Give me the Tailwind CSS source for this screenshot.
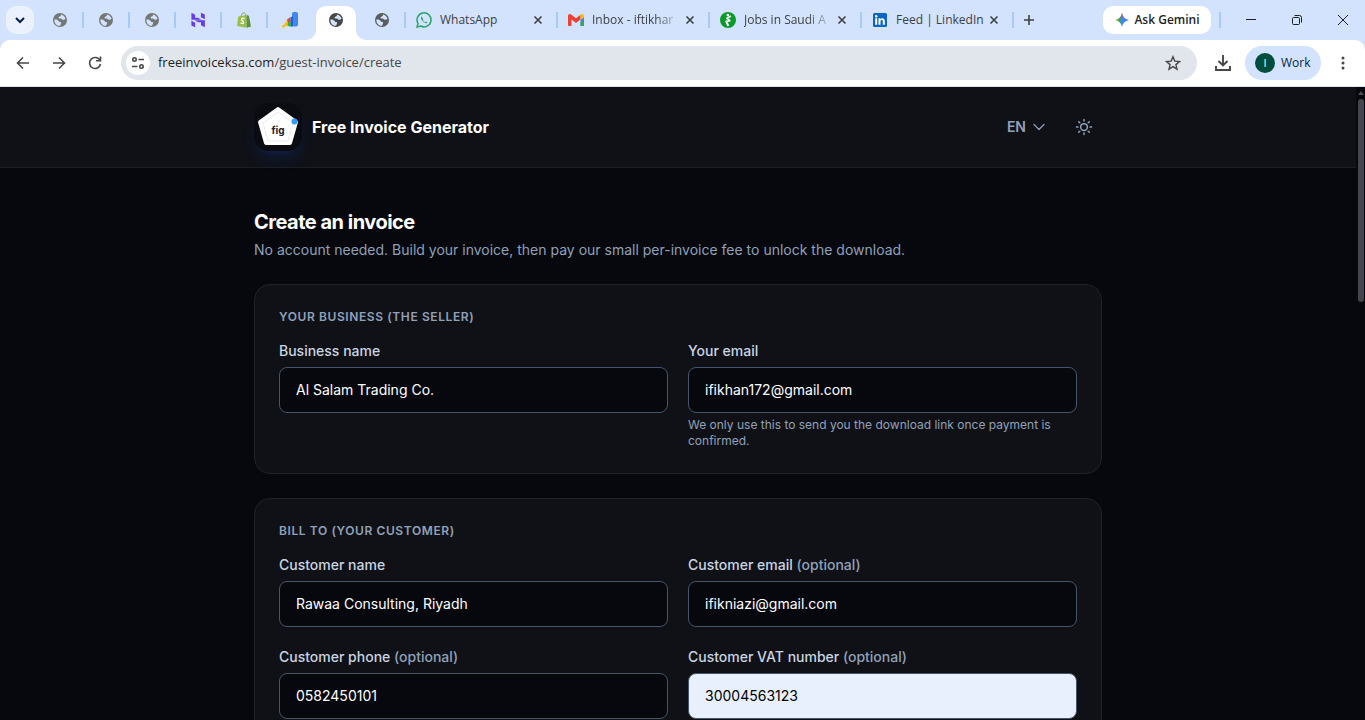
<!DOCTYPE html>
<html lang="en">
<head>
    <meta charset="UTF-8">
    <meta name="viewport" content="width=device-width, initial-scale=1.0">
    <title>Free Invoice Generator</title>
    <script src="https://cdn.jsdelivr.net/npm/@tailwindcss/browser@4"></script>
</head>
<body class="h-screen overflow-hidden flex flex-col bg-[#06080d] font-['Open_Sans',sans-serif]">

    <!-- Shared icons -->
    <svg class="hidden">
        <symbol id="globe" viewBox="0 0 16 16">
            <circle cx="8" cy="8" r="7" fill="currentColor"/>
            <path d="M2.6 7.2c1.5.2 2.6.3 3.600 1.200s1 1.600 2.100 1.600c.9.1 1 .7.7 1.500l-.9 2.300c-3.200.1-5.700-2.300-5.700-5.300z" fill="#d3e3fd"/>
            <path d="M9 2.400c2.200.4 4 2.100 4.500 4.400l-1.500.9c-.7.3-1.400.1-1.900-.5-.6-.6-1.600-.7-2.300-.6-.8.1-1.400-.4-1.200-1.100.2-.8 1-1 1.600-1.300.7-.4.9-1 .8-1.800z" fill="#d3e3fd"/>
        </symbol>
        <symbol id="close" viewBox="0 0 16 16">
            <path d="M4.500 4.500l7 7M11.500 4.500l-7 7" stroke="currentColor" stroke-width="1.600" fill="none"/>
        </symbol>
    </svg>

    <!-- Tab strip -->
    <header class="shrink-0 bg-[#d3e3fd] text-[#1f1f1f]">
        <div class="flex items-center h-10 pl-1.5">
            <button aria-label="Search tabs" class="size-7 mr-[3px] shrink-0 rounded-[10px] bg-[#ebf2fe] flex items-center justify-center">
                <svg class="size-4" viewBox="0 0 16 16" fill="none" stroke="#041e49" stroke-width="2"><path d="M4 6l4 4 4-4"/></svg>
            </button>

            <div class="relative w-[46px] h-10 shrink-0 flex items-center justify-center text-[#747775]">
                <svg class="size-4"><use href="#globe"/></svg>
                <span class="absolute -right-px top-3 w-0.5 h-4 bg-[#a8c7fa]"></span>
            </div>
            <div class="relative w-[46px] h-10 shrink-0 flex items-center justify-center text-[#747775]">
                <svg class="size-4"><use href="#globe"/></svg>
                <span class="absolute -right-px top-3 w-0.5 h-4 bg-[#a8c7fa]"></span>
            </div>
            <div class="relative w-[46px] h-10 shrink-0 flex items-center justify-center text-[#747775]">
                <svg class="size-4"><use href="#globe"/></svg>
                <span class="absolute -right-px top-3 w-0.5 h-4 bg-[#a8c7fa]"></span>
            </div>
            <div class="relative w-[46px] h-10 shrink-0 flex items-center justify-center">
                <svg class="size-4" viewBox="0 0 24 24" fill="#673de6">
                    <path d="M16.400 1v6.800l5.800 3.200V3.900zM2.100 1v10.500h15.300l-5.600-3H7.700V4.300zM16.500 19.700v-4.400h-4.100l-5.700-3 15.600.1V23zM2.100 20.100v-6.800l5.600 3V23z"/>
                </svg>
                <span class="absolute -right-px top-3 w-0.5 h-4 bg-[#a8c7fa]"></span>
            </div>
            <div class="relative w-[46px] h-10 shrink-0 flex items-center justify-center">
                <svg class="size-4" viewBox="0 0 16 16">
                    <path d="M5 4.500C5.300 2 6.600.9 7.800.9s2 1 2.200 3" fill="none" stroke="#7aa23b" stroke-width=".9"/>
                    <path d="M2.300 4.500L10.500 3l.3 12.800L1 14z" fill="#95bf47"/>
                    <path d="M10.500 3l2.400.8L15 14.600l-4.200 1.200z" fill="#5e8e3e"/>
                    <path d="M8.500 6.700c-1.700-.9-3.300-.1-2.900 1.200.3 1 2.200 1.300 2 2.700-.2 1.200-1.800 1.200-2.900.3" fill="none" stroke="#fff" stroke-width="1.400"/>
                </svg>
                <span class="absolute -right-px top-3 w-0.5 h-4 bg-[#a8c7fa]"></span>
            </div>
            <div class="w-[46px] h-10 shrink-0 flex items-center justify-center">
                <svg class="size-4" viewBox="0 0 16 16">
                    <circle cx="1.500" cy="14.200" r="1.300" fill="#fbbc04"/>
                    <path d="M2 12.500l3-4 3-1.500v7H4.500a2 2 0 0 1-2.500-1.500z" fill="#fbbc04"/>
                    <path d="M5 7.500L8.500 5v7L6 10.500z" fill="#ea4335"/>
                    <path d="M6 11l4-3v6.500H7.500A2.500 2.500 0 0 1 6 11z" fill="#34a853"/>
                    <rect x="10" y="0" width="6" height="14.500" rx="2" fill="#4285f4"/>
                    <path d="M8.500 5.500L11 4v10.500H9z" fill="#1967d2"/>
                </svg>
            </div>

            <!-- Active tab -->
            <div class="w-[46px] h-10 shrink-0 flex items-end justify-center text-[#474747]">
                <div class="relative w-10 h-[34px] bg-white rounded-t-[10px] flex justify-center pt-1.5">
                    <svg class="size-4"><use href="#globe"/></svg>
                    <svg class="absolute -left-2.5 bottom-0 size-2.5" viewBox="0 0 10 10" fill="#fff"><path d="M10 0v10H0A10 10 0 0 0 10 0z"/></svg>
                    <svg class="absolute -right-2.5 bottom-0 size-2.5" viewBox="0 0 10 10" fill="#fff"><path d="M0 0v10h10A10 10 0 0 1 0 0z"/></svg>
                </div>
            </div>
            <div class="relative w-[46px] h-10 shrink-0 flex items-center justify-center text-[#5a5d61]">
                <svg class="size-4"><use href="#globe"/></svg>
                <span class="absolute -right-px top-3 w-0.5 h-4 bg-[#a8c7fa]"></span>
            </div>

            <div class="relative w-[152px] h-10 flex items-center pl-[11px] pr-[11px] text-xs text-[#3c4043]">
                <svg class="size-4 mr-2 shrink-0" viewBox="0 0 16 16" fill="none" stroke="#25a566" stroke-width="1.500">
                    <path d="M1 15l1-3.600A7 7 0 1 1 4.700 14z"/>
                    <path d="M5.500 4.500c-1 .8-.8 2.500 1 4.500s3.800 2.800 5 1.700l-1.600-1.200-1 .7c-1-.4-1.700-1.200-2.200-2.200l.6-.8z" fill="#25a566" stroke="none"/>
                </svg>
                <span class="flex-1 min-w-0 whitespace-nowrap">WhatsApp</span>
                <button aria-label="Close tab" class="size-4 shrink-0"><svg class="size-4"><use href="#close"/></svg></button>
                <span class="absolute -right-px top-3 w-0.5 h-4 bg-[#a8c7fa]"></span>
            </div>
            <div class="relative w-[152px] h-10 flex items-center pl-[11px] pr-[11px] text-xs text-[#3c4043]">
                <svg class="size-4 mr-2 shrink-0" viewBox="0 0 16 16">
                    <path d="M0 4v9.200c0 .6.4.8.8.8h2.700V6z" fill="#ea4335"/>
                    <path d="M12.500 6v8h2.700c.5 0 .8-.3.8-.8V4z" fill="#4285f4"/>
                    <path d="M12.500 10v4h2.700c.5 0 .8-.3.8-.8V9z" fill="#34a853"/>
                    <path d="M0 4c0-2 2-2.600 3.500-1.200L8 6.300l4.500-3.500v4.700L8 11 3.500 7.500 0 5.500z" fill="#ea4335"/>
                    <path d="M12.500 2.800v5L16 5.500V4c0-2-2-2.600-3.500-1.200z" fill="#fbbc04"/>
                </svg>
                <span class="flex-1 min-w-0 whitespace-nowrap mask-r-from-70%">Inbox - iftikhar</span>
                <button aria-label="Close tab" class="size-4 shrink-0"><svg class="size-4"><use href="#close"/></svg></button>
                <span class="absolute -right-px top-3 w-0.5 h-4 bg-[#a8c7fa]"></span>
            </div>
            <div class="relative w-[152px] h-10 flex items-center pl-[11px] pr-[11px] text-xs text-[#3c4043]">
                <svg class="size-4 mr-2 shrink-0" viewBox="0 0 16 16">
                    <circle cx="8" cy="8" r="8" fill="#0a9a2c"/>
                    <path d="M10.800 4L7 6.300l2.700 2.300-3.400.9 2 4.500" fill="none" stroke="#fff" stroke-width="1.900" stroke-linejoin="round"/>
                    <circle cx="7.800" cy="3" r="1.300" fill="#fff"/>
                </svg>
                <span class="flex-1 min-w-0 whitespace-nowrap mask-r-from-70%">Jobs in Saudi A</span>
                <button aria-label="Close tab" class="size-4 shrink-0"><svg class="size-4"><use href="#close"/></svg></button>
                <span class="absolute -right-px top-3 w-0.5 h-4 bg-[#a8c7fa]"></span>
            </div>
            <div class="relative w-[152px] h-10 flex items-center pl-[11px] pr-[11px] text-xs text-[#3c4043]">
                <svg class="size-4 mr-2 shrink-0" viewBox="0 0 16 16">
                    <rect x="1" y="1" width="14" height="14" rx="1.500" fill="#0a66c2"/>
                    <path d="M3.200 6.300h2v6.500h-2zM6.500 6.300h1.900v.9c.9-1.600 4.400-1.500 4.400 1.800v3.800h-2V9.500c0-2-2.300-1.800-2.300 0v3.300h-2z" fill="#fff"/>
                    <circle cx="4.200" cy="4.200" r="1.200" fill="#fff"/>
                </svg>
                <span class="flex-1 min-w-0 whitespace-nowrap">Feed | LinkedIn</span>
                <button aria-label="Close tab" class="size-4 shrink-0"><svg class="size-4"><use href="#close"/></svg></button>
                <span class="absolute -right-px top-3 w-0.5 h-4 bg-[#a8c7fa]"></span>
            </div>
            <button aria-label="New tab" class="size-8 shrink-0 flex items-center justify-center">
                <svg class="size-4" viewBox="0 0 16 16" stroke="#3c4043" stroke-width="1.600"><path d="M8 3v10M3 8h10"/></svg>
            </button>

            <div class="ml-auto -mr-px flex items-center shrink-0">
                <button class="w-[108px] h-7 rounded-[10px] bg-white flex items-center justify-center gap-1 text-xs font-semibold whitespace-nowrap">
                    <svg class="size-4" viewBox="0 0 16 16">
                        <defs>
                            <linearGradient id="gem" x1="0" y1="0" x2="1" y2="0">
                                <stop offset="0" stop-color="#fbbc04"/><stop offset=".3" stop-color="#34a853"/><stop offset=".5" stop-color="#4285f4"/><stop offset="1" stop-color="#3186ff"/>
                            </linearGradient>
                            <linearGradient id="gemTop" x1="0" y1="0" x2="0" y2="1">
                                <stop offset="0" stop-color="#ea4335"/><stop offset=".45" stop-color="#ea4335" stop-opacity="0"/>
                            </linearGradient>
                        </defs>
                        <path d="M8 1c1 4 3 6 7 7-4 1-6 3-7 7-1-4-3-6-7-7 4-1 6-3 7-7z" fill="url(#gem)"/>
                        <path d="M8 1c1 4 3 6 7 7-4 1-6 3-7 7-1-4-3-6-7-7 4-1 6-3 7-7z" fill="url(#gemTop)"/>
                    </svg>
                    Ask Gemini
                </button>
                <span class="ml-2 w-0.5 h-4 bg-[#a8c7fa]"></span>
                <div class="flex ml-[7px]">
                    <button aria-label="Minimize" class="w-[46px] h-10 flex items-center justify-center">
                        <svg class="size-3" viewBox="0 0 12 12" stroke="#1f1f1f"><path d="M1 5.500h10"/></svg>
                    </button>
                    <button aria-label="Restore" class="w-[46px] h-10 flex items-center justify-center">
                        <svg class="size-3" viewBox="0 0 12 12" fill="none" stroke="#1f1f1f"><rect x="1.500" y="3.500" width="7" height="7" rx="1"/><path d="M3.500 1.500h5a2 2 0 0 1 2 2v5"/></svg>
                    </button>
                    <button aria-label="Close" class="w-[46px] h-10 flex items-center justify-center">
                        <svg class="size-3" viewBox="0 0 12 12" stroke="#1f1f1f"><path d="M1 1l10 10M11 1L1 11"/></svg>
                    </button>
                </div>
            </div>
        </div>

        <!-- Toolbar -->
        <div class="flex items-center h-[47px] bg-white rounded-t-[10px] border-b border-[#dfe3ea] pl-[11px] pr-[14px] text-[#474747]">
            <div class="flex gap-3">
                <button aria-label="Back" class="size-6 flex items-center justify-center"><svg class="size-4" viewBox="0 0 16 16" fill="none" stroke="currentColor" stroke-width="1.600"><path d="M14 8H3M8 2.500L2.500 8 8 13.500"/></svg></button>
                <button aria-label="Forward" class="size-6 flex items-center justify-center"><svg class="size-4" viewBox="0 0 16 16" fill="none" stroke="currentColor" stroke-width="1.600"><path d="M2 8h11M8 2.500L13.500 8 8 13.500"/></svg></button>
                <button aria-label="Reload" class="size-6 flex items-center justify-center"><svg class="size-4" viewBox="0 0 16 16" fill="none" stroke="currentColor" stroke-width="1.600"><path d="M13 5.500A5.500 5.500 0 1 0 13.500 9M13.500 1.500v4.300H9"/></svg></button>
            </div>
            <div class="ml-[14px] flex-1 h-[34px] rounded-full bg-[#e1e5ec] flex items-center pl-[5px] pr-4">
                <button aria-label="Site information" class="size-6 rounded-full bg-white flex items-center justify-center">
                    <svg class="size-4" viewBox="0 0 16 16" fill="none" stroke="currentColor" stroke-width="1.600"><circle cx="4.500" cy="4.500" r="1.700"/><path d="M8.500 4.500H14M2 11.500h5.500"/><circle cx="11.500" cy="11.500" r="1.700"/></svg>
                </button>
                <a href="#" class="ml-2 flex-1 text-[13px] text-[#474747]"><span class="text-[#1f1f1f]">freeinvoiceksa.com</span>/guest-invoice/create</a>
                <button aria-label="Bookmark"><svg class="size-4" viewBox="0 0 16 16" fill="none" stroke="currentColor" stroke-width="1.400"><path d="M8 1.700l1.800 4.400 4.700.4-3.600 3.100 1.100 4.600L8 11.700l-4 2.500 1.100-4.600-3.600-3.100 4.700-.4z"/></svg></button>
            </div>
            <button aria-label="Downloads" class="ml-[18px]"><svg class="size-4" viewBox="0 0 16 16" fill="none" stroke="currentColor" stroke-width="1.900"><path d="M8 0v10M3.500 6L8 10.500 12.500 6M1 11v4h14v-4"/></svg></button>
            <button class="ml-[14px] w-[76px] h-[34px] rounded-full bg-[#d3e3fd] flex items-center pl-[10px] gap-1.5 text-xs text-[#041e49]">
                <span class="size-5 rounded-full bg-[#004d40] text-white text-[11px] flex items-center justify-center">I</span>
                Work
            </button>
            <button aria-label="Menu" class="ml-[14px]"><svg class="size-4" viewBox="0 0 16 16" fill="currentColor"><circle cx="8" cy="3" r="1.500"/><circle cx="8" cy="8" r="1.500"/><circle cx="8" cy="13" r="1.500"/></svg></button>
        </div>
    </header>

    <div class="flex flex-1 min-h-0 font-['Inter',sans-serif]">
        <div class="flex-1 overflow-hidden">
            <!-- Site header -->
            <div class="bg-[#101117] border-b border-[#1c1e24]">
                <div class="max-w-4xl mx-auto px-6 py-4 flex items-center justify-between">
                    <a href="#" class="flex items-center gap-2.5">
                        <svg class="size-12 rounded-[14px] bg-[#0a0c12] shadow-lg shadow-blue-600/15" viewBox="0 0 48 48">
                            <path d="M24 6L42 19l-6 21H12L6 19z" fill="#fff" stroke="#fff" stroke-width="4" stroke-linejoin="round"/>
                            <path d="M24 9l15 11-5 18H14L9 20z" fill="none" stroke="#e8eaf2" stroke-linejoin="round"/>
                            <text x="24" y="31" text-anchor="middle" font-size="10" font-weight="700" fill="#1e2130">fig</text>
                            <circle cx="40.500" cy="18.500" r="3" fill="#2f9bff"/>
                        </svg>
                        <span class="text-base font-bold text-white">Free Invoice Generator</span>
                    </a>
                    <div class="flex items-center gap-2 text-slate-400">
                        <button class="h-9 px-3 flex items-center gap-1.5 text-sm font-semibold">
                            EN
                            <svg class="size-3.5" viewBox="0 0 14 14" fill="none" stroke="currentColor" stroke-width="1.200" stroke-linecap="round" stroke-linejoin="round"><path d="M2 4.500l5 5 5-5"/></svg>
                        </button>
                        <button aria-label="Toggle theme" class="size-9 flex items-center justify-center">
                            <svg class="size-[18px]" viewBox="0 0 24 24" fill="none" stroke="currentColor" stroke-width="2" stroke-linecap="round"><circle cx="12" cy="12" r="4.500"/><path d="M12 2v2M12 20v2M2 12h2M20 12h2M4.900 4.900l1.500 1.500M17.600 17.600l1.500 1.500M4.900 19.100l1.500-1.500M17.600 6.400l1.500-1.500"/></svg>
                        </button>
                    </div>
                </div>
            </div>

            <main class="max-w-4xl mx-auto px-6 py-10">
                <h1 class="text-xl font-bold tracking-tight text-white">Create an invoice</h1>
                <p class="mt-1 text-sm text-slate-400">No account needed. Build your invoice, then pay our small per-invoice fee to unlock the download.</p>

                <form class="mt-6 space-y-6">
                    <!-- Seller -->
                    <section class="rounded-2xl border border-[#1e222b] bg-[#101117] p-6">
                        <h2 class="text-xs font-semibold uppercase tracking-wider text-slate-400">Your business (the seller)</h2>
                        <div class="mt-4 grid grid-cols-2 gap-5">
                            <div>
                                <label for="business-name" class="block text-sm font-medium text-slate-300">Business name</label>
                                <input id="business-name" type="text" value="Al Salam Trading Co." class="mt-1.5 block w-full rounded-lg border border-slate-600 bg-[#06080d] px-4 py-3 text-sm text-white">
                            </div>
                            <div>
                                <label for="your-email" class="block text-sm font-medium text-slate-300">Your email</label>
                                <input id="your-email" type="email" value="ifikhan172@gmail.com" class="mt-1.5 block w-full rounded-lg border border-slate-600 bg-[#06080d] px-4 py-3 text-sm text-white">
                                <p class="mt-1 text-xs text-slate-400">We only use this to send you the download link once payment is confirmed.</p>
                            </div>
                        </div>
                    </section>

                    <!-- Customer -->
                    <section class="rounded-2xl border border-[#1e222b] bg-[#101117] p-6">
                        <h2 class="text-xs font-semibold uppercase tracking-wider text-slate-400">Bill to (your customer)</h2>
                        <div class="mt-4 grid grid-cols-2 gap-5">
                            <div>
                                <label for="customer-name" class="block text-sm font-medium text-slate-300">Customer name</label>
                                <input id="customer-name" type="text" value="Rawaa Consulting, Riyadh" class="mt-1.5 block w-full rounded-lg border border-slate-600 bg-[#06080d] px-4 py-3 text-sm text-white">
                            </div>
                            <div>
                                <label for="customer-email" class="block text-sm font-medium text-slate-300">Customer email <span class="text-slate-400">(optional)</span></label>
                                <input id="customer-email" type="email" value="ifikniazi@gmail.com" class="mt-1.5 block w-full rounded-lg border border-slate-600 bg-[#06080d] px-4 py-3 text-sm text-white">
                            </div>
                            <div>
                                <label for="customer-phone" class="block text-sm font-medium text-slate-300">Customer phone <span class="text-slate-400">(optional)</span></label>
                                <input id="customer-phone" type="tel" value="0582450101" class="mt-1.5 block w-full rounded-lg border border-slate-600 bg-[#06080d] px-4 py-3 text-sm text-white">
                            </div>
                            <div>
                                <label for="customer-vat" class="block text-sm font-medium text-slate-300">Customer VAT number <span class="text-slate-400">(optional)</span></label>
                                <input id="customer-vat" type="text" value="30004563123" class="mt-1.5 block w-full rounded-lg border border-slate-600 bg-[#e8f0fe] px-4 py-3 text-sm text-black">
                            </div>
                        </div>
                    </section>
                </form>
            </main>
        </div>

        <!-- Scrollbar -->
        <div class="w-[9px] shrink-0 flex flex-col items-center pt-1 bg-[#06080d]">
            <svg class="w-1.5 h-1" viewBox="0 0 6 4" fill="#4b4d57"><path d="M3 0l3 4H0z"/></svg>
            <div class="mt-1 w-1.5 h-[203px] rounded-full bg-[#43454f]"></div>
        </div>
    </div>

</body>
</html>
